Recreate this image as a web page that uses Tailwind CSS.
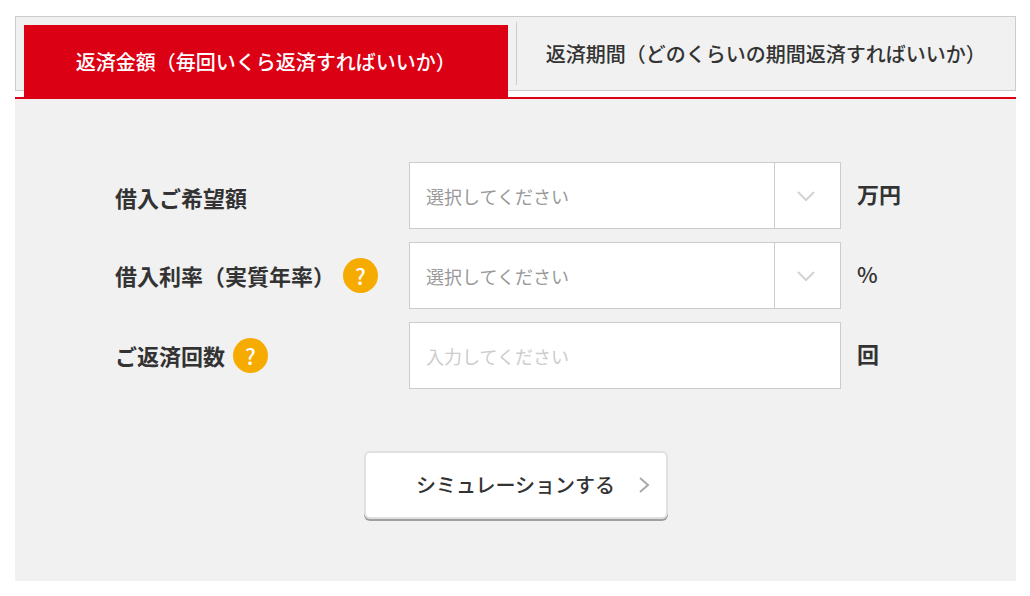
<!DOCTYPE html>
<html lang="ja">
<head>
  <meta charset="UTF-8" />
  <meta name="viewport" content="width=device-width, initial-scale=1" />
  <title>返済シミュレーション</title>
  <script src="https://cdn.jsdelivr.net/npm/@tailwindcss/browser@4"></script>
</head>
<body class="bg-white text-[#333] font-['Noto_Sans_CJK_JP',sans-serif]">

  <main class="pl-[15px] pr-3.5 py-4">

    <!-- Tabs -->
    <div role="tablist" class="grid grid-cols-2 grid-rows-[73px] mb-1.5 border border-[#ccc] bg-[#f1f1f1] text-xl font-medium">
      <div class="px-2 pt-2">
        <button type="button" role="tab" aria-selected="true" class="w-full h-[73px] bg-[#dc0014] text-white">返済金額（毎回いくら返済すればいいか）</button>
      </div>
      <button type="button" role="tab" aria-selected="false" class="my-[5px] border-l border-[#ccc]">返済期間（どのくらいの期間返済すればいいか）</button>
    </div>

    <!-- Form -->
    <form class="border-t-2 border-[#dc0014] bg-[#f1f1f1] px-25 pt-[63px] pb-[62px]">
      <div class="grid grid-cols-[278px_1fr_59px] gap-x-4 gap-y-[13px] items-center text-[22px] font-bold">

        <label for="amount" class="pt-1">借入ご希望額</label>
        <div class="relative">
          <select id="amount" class="block w-full h-[67px] px-4 appearance-none border border-[#ccc] bg-white text-lg font-normal text-[#999]">
            <option>選択してください</option>
          </select>
          <span class="absolute inset-y-0 right-0 w-[67px] pr-1 border-l border-[#ccc] flex items-center justify-center pointer-events-none">
            <svg class="w-5 h-3 text-[#d3d3d3]" viewBox="0 0 20 12" fill="none" stroke="currentColor" stroke-width="2"><path d="M2 2l8 8 8-8" /></svg>
          </span>
        </div>
        <span class="pb-1">万円</span>

        <div class="flex items-center gap-2">
          <label for="rate">借入利率（実質年率）</label>
          <button type="button" aria-label="借入利率について" class="size-[35px] shrink-0 rounded-full bg-[#f5ab00] text-white font-medium">?</button>
        </div>
        <div class="relative">
          <select id="rate" class="block w-full h-[67px] px-4 appearance-none border border-[#ccc] bg-white text-lg font-normal text-[#999]">
            <option>選択してください</option>
          </select>
          <span class="absolute inset-y-0 right-0 w-[67px] pr-1 border-l border-[#ccc] flex items-center justify-center pointer-events-none">
            <svg class="w-5 h-3 text-[#d3d3d3]" viewBox="0 0 20 12" fill="none" stroke="currentColor" stroke-width="2"><path d="M2 2l8 8 8-8" /></svg>
          </span>
        </div>
        <span class="pb-1 font-medium">%</span>

        <div class="flex items-center gap-2">
          <label for="times">ご返済回数</label>
          <button type="button" aria-label="ご返済回数について" class="size-[35px] shrink-0 rounded-full bg-[#f5ab00] text-white font-medium">?</button>
        </div>
        <input type="text" id="times" placeholder="入力してください"
          class="block w-full h-[67px] px-4 border border-[#ccc] bg-white text-lg font-normal placeholder:text-[#ccc]" />
        <span class="pb-1">回</span>
      </div>

      <button type="submit" class="relative block w-[304px] h-17 mt-[62px] mx-auto rounded-md border-2 border-[#e0e0e0] bg-white shadow-[0_2px_0_#a0a0a0] text-xl font-medium">
        シミュレーションする
        <svg class="absolute right-4 inset-y-0 my-auto w-3 h-4 text-[#aaa]" viewBox="0 0 12 16" fill="none" stroke="currentColor" stroke-width="2"><path d="M2 1l8 7-8 7" /></svg>
      </button>
    </form>
  </main>

</body>
</html>
